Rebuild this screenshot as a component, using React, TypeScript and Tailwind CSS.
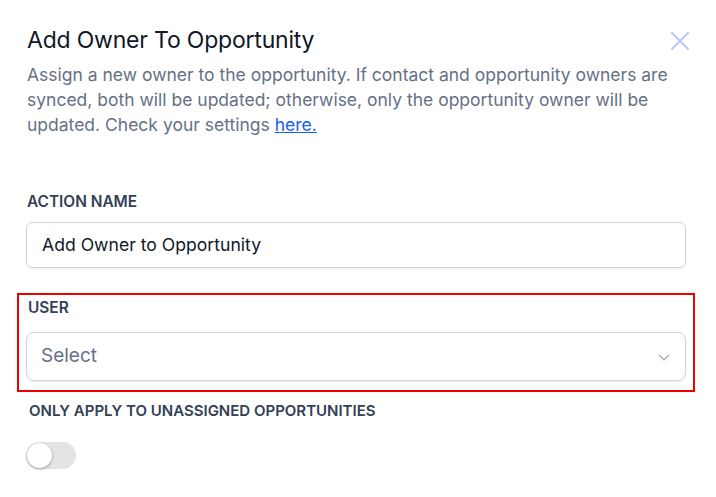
import React from "react";

export default function App() {
  return (
    <div className="w-[716px] h-[497px] bg-white relative overflow-hidden" style={{ fontFamily: "Inter, 'Noto Sans', sans-serif" }}>
      <div className="pl-[27px] pr-[30px] pt-[26px]">
        <div className="flex items-start justify-between">
          <h1 className="text-[23px] leading-[28px] text-[#101828] font-normal tracking-[-0.2px]">Add Owner To Opportunity</h1>
          <button className="mt-[5px] mr-[-4px] text-[#b8c6fb]">
            <svg width="20" height="20" viewBox="0 0 20 20" fill="none" stroke="currentColor" strokeWidth="2" strokeLinecap="round">
              <path d="M2 2L18 18M18 2L2 18" />
            </svg>
          </button>
        </div>
        <p className="mt-[8px] text-[17.5px] leading-[25px] text-[#667085] pr-[6px]">
          Assign a new owner to the opportunity. If contact and opportunity owners are synced, both will be updated; otherwise, only the opportunity owner will be updated. Check your settings{" "}
          <a className="text-[#155eef] underline">here.</a>
        </p>
      </div>

      <div className="pl-[26px] pr-[30px] mt-[55px]">
        <div className="text-[15.4px] leading-[20px] font-semibold text-[#344054] ml-[1px]">ACTION NAME</div>
        <div className="mt-[10px] h-[46px] rounded-[6px] border border-[#d0d5dd] shadow-[0_1px_2px_rgba(16,24,40,0.08)] flex items-center px-[15px] text-[17.6px] text-[#101828]">
          Add Owner to Opportunity
        </div>
      </div>

      <div className="ml-[17px] mr-[21px] mt-[25px] border-2 border-[#ee0000] pl-[7px] pr-[7px] pt-[3px] pb-[9px]">
        <div className="text-[15.4px] leading-[20px] font-semibold text-[#344054] ml-[2px]">USER</div>
        <div className="mt-[14px] h-[49px] rounded-[8px] border border-[#d0d5dd] shadow-[0_1px_2px_rgba(16,24,40,0.1)] flex items-center justify-between pl-[14px] pr-[14px]">
          <span className="text-[19px] text-[#667085]">Select</span>
          <svg width="14" height="14" viewBox="0 0 14 14" fill="none" stroke="#a0a6b4" strokeWidth="1.2">
            <path d="M2 5l5 5 5-5" />
          </svg>
        </div>
      </div>

      <div className="px-[26px] mt-[9px]">
        <div className="text-[15px] leading-[20px] font-semibold text-[#344054] ml-[3px]">ONLY APPLY TO UNASSIGNED OPPORTUNITIES</div>
        <div className="mt-[21px] w-[50px] h-[27px] rounded-full bg-[#e4e4e7] relative">
          <div className="absolute left-[1px] top-[1px] w-[25px] h-[25px] rounded-full bg-white shadow-[0_1px_3px_rgba(0,0,0,0.35)]" />
        </div>
      </div>
    </div>
  );
}
